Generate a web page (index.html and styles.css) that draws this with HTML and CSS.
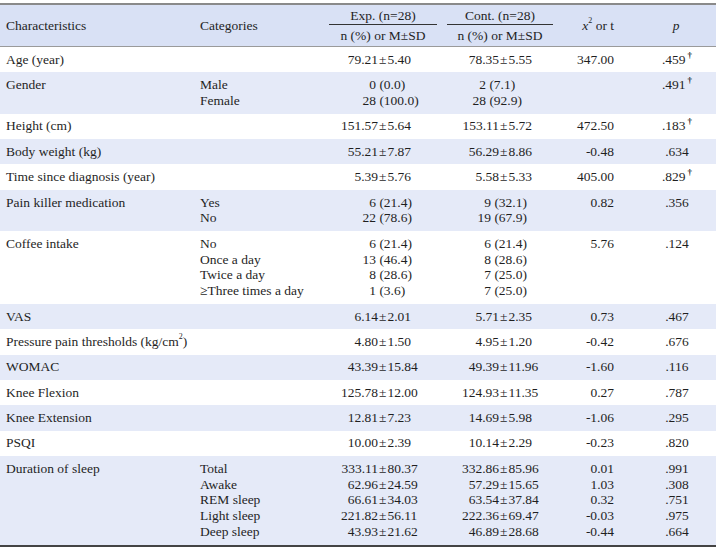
FILE: index.html
```html
<!DOCTYPE html>
<html lang="en">
<head>
<meta charset="utf-8">
<title>Characteristics table</title>
<link rel="stylesheet" href="styles.css">
</head>
<body>
<table class="tbl">
  <colgroup>
    <col class="w1"><col class="w2"><col class="w3"><col class="w4"><col class="w5"><col class="w6">
  </colgroup>
  <thead>
    <tr class="h1">
      <th rowspan="2" class="lft mid">Characteristics</th>
      <th rowspan="2" class="lft mid cat">Categories</th>
      <th class="grp"><div class="ul">Exp. (n=28)</div></th>
      <th class="grp"><div class="ul">Cont. (n=28)</div></th>
      <th rowspan="2" class="mid stat"><i>x</i><sup class="sq">2</sup> or t</th>
      <th rowspan="2" class="mid pv"><i>p</i></th>
    </tr>
    <tr class="h2">
      <th class="sub">n (%) or M±SD</th>
      <th class="sub">n (%) or M±SD</th>
    </tr>
  </thead>
  <tbody>
    <tr>
      <td>Age (year)</td><td class="cat"></td>
      <td class="e"><div><span class="a">79.21</span><span class="pm">±</span>5.40</div></td>
      <td class="c"><div><span class="a">78.35</span><span class="pm">±</span>5.55</div></td>
      <td class="stat">347.00</td><td class="pv">.459<sup class="dg">†</sup></td>
    </tr>
    <tr>
      <td>Gender</td><td class="cat"><div>Male</div><div>Female</div></td>
      <td class="e"><div><span class="a p">0</span>&nbsp;(0.0)</div><div><span class="a p">28</span>&nbsp;(100.0)</div></td>
      <td class="c"><div><span class="a p g">2</span>&nbsp;(7.1)</div><div><span class="a p g">28</span>&nbsp;(92.9)</div></td>
      <td class="stat"></td><td class="pv">.491<sup class="dg">†</sup></td>
    </tr>
    <tr>
      <td>Height (cm)</td><td class="cat"></td>
      <td class="e"><div><span class="a">151.57</span><span class="pm">±</span>5.64</div></td>
      <td class="c"><div><span class="a">153.11</span><span class="pm">±</span>5.72</div></td>
      <td class="stat">472.50</td><td class="pv">.183<sup class="dg">†</sup></td>
    </tr>
    <tr>
      <td>Body weight (kg)</td><td class="cat"></td>
      <td class="e"><div><span class="a">55.21</span><span class="pm">±</span>7.87</div></td>
      <td class="c"><div><span class="a">56.29</span><span class="pm">±</span>8.86</div></td>
      <td class="stat">-0.48</td><td class="pv">.634</td>
    </tr>
    <tr>
      <td>Time since diagnosis (year)</td><td class="cat"></td>
      <td class="e"><div><span class="a">5.39</span><span class="pm">±</span>5.76</div></td>
      <td class="c"><div><span class="a">5.58</span><span class="pm">±</span>5.33</div></td>
      <td class="stat">405.00</td><td class="pv">.829<sup class="dg">†</sup></td>
    </tr>
    <tr>
      <td>Pain killer medication</td><td class="cat"><div>Yes</div><div>No</div></td>
      <td class="e"><div><span class="a p">6</span>&nbsp;(21.4)</div><div><span class="a p">22</span>&nbsp;(78.6)</div></td>
      <td class="c"><div><span class="a p">9</span>&nbsp;(32.1)</div><div><span class="a p">19</span>&nbsp;(67.9)</div></td>
      <td class="stat">0.82</td><td class="pv">.356</td>
    </tr>
    <tr>
      <td>Coffee intake</td>
      <td class="cat"><div>No</div><div>Once a day</div><div>Twice a day</div><div>≥Three times a day</div></td>
      <td class="e"><div><span class="a p">6</span>&nbsp;(21.4)</div><div><span class="a p">13</span>&nbsp;(46.4)</div><div><span class="a p">8</span>&nbsp;(28.6)</div><div><span class="a p">1</span>&nbsp;(3.6)</div></td>
      <td class="c"><div><span class="a p">6</span>&nbsp;(21.4)</div><div><span class="a p">8</span>&nbsp;(28.6)</div><div><span class="a p">7</span>&nbsp;(25.0)</div><div><span class="a p">7</span>&nbsp;(25.0)</div></td>
      <td class="stat">5.76</td><td class="pv">.124</td>
    </tr>
    <tr>
      <td>VAS</td><td class="cat"></td>
      <td class="e"><div><span class="a">6.14</span><span class="pm">±</span>2.01</div></td>
      <td class="c"><div><span class="a">5.71</span><span class="pm">±</span>2.35</div></td>
      <td class="stat">0.73</td><td class="pv">.467</td>
    </tr>
    <tr>
      <td>Pressure pain thresholds (kg/cm<sup class="sq">2</sup>)</td><td class="cat"></td>
      <td class="e"><div><span class="a">4.80</span><span class="pm">±</span>1.50</div></td>
      <td class="c"><div><span class="a">4.95</span><span class="pm">±</span>1.20</div></td>
      <td class="stat">-0.42</td><td class="pv">.676</td>
    </tr>
    <tr>
      <td>WOMAC</td><td class="cat"></td>
      <td class="e"><div><span class="a">43.39</span><span class="pm">±</span>15.84</div></td>
      <td class="c"><div><span class="a">49.39</span><span class="pm">±</span>11.96</div></td>
      <td class="stat">-1.60</td><td class="pv">.116</td>
    </tr>
    <tr>
      <td>Knee Flexion</td><td class="cat"></td>
      <td class="e"><div><span class="a">125.78</span><span class="pm">±</span>12.00</div></td>
      <td class="c"><div><span class="a">124.93</span><span class="pm">±</span>11.35</div></td>
      <td class="stat">0.27</td><td class="pv">.787</td>
    </tr>
    <tr>
      <td>Knee Extension</td><td class="cat"></td>
      <td class="e"><div><span class="a">12.81</span><span class="pm">±</span>7.23</div></td>
      <td class="c"><div><span class="a">14.69</span><span class="pm">±</span>5.98</div></td>
      <td class="stat">-1.06</td><td class="pv">.295</td>
    </tr>
    <tr>
      <td>PSQI</td><td class="cat"></td>
      <td class="e"><div><span class="a">10.00</span><span class="pm">±</span>2.39</div></td>
      <td class="c"><div><span class="a">10.14</span><span class="pm">±</span>2.29</div></td>
      <td class="stat">-0.23</td><td class="pv">.820</td>
    </tr>
    <tr class="last">
      <td>Duration of sleep</td>
      <td class="cat"><div>Total</div><div>Awake</div><div>REM sleep</div><div>Light sleep</div><div>Deep sleep</div></td>
      <td class="e">
        <div><span class="a">333.11</span><span class="pm">±</span>80.37</div>
        <div><span class="a">62.96</span><span class="pm">±</span>24.59</div>
        <div><span class="a">66.61</span><span class="pm">±</span>34.03</div>
        <div><span class="a">221.82</span><span class="pm">±</span>56.11</div>
        <div><span class="a">43.93</span><span class="pm">±</span>21.62</div>
      </td>
      <td class="c">
        <div><span class="a">332.86</span><span class="pm">±</span>85.96</div>
        <div><span class="a">57.29</span><span class="pm">±</span>15.65</div>
        <div><span class="a">63.54</span><span class="pm">±</span>37.84</div>
        <div><span class="a">222.36</span><span class="pm">±</span>69.47</div>
        <div><span class="a">46.89</span><span class="pm">±</span>28.68</div>
      </td>
      <td class="stat"><div>0.01</div><div>1.03</div><div>0.32</div><div>-0.03</div><div>-0.44</div></td>
      <td class="pv"><div>.991</div><div>.308</div><div>.751</div><div>.975</div><div>.664</div></td>
    </tr>
  </tbody>
</table>
</body>
</html>
```

FILE: styles.css
```css
html, body {
  margin: 0;
  padding: 0;
  background: #ffffff;
}
body {
  padding-top: 3px;
  font-family: "Liberation Serif", "Times New Roman", serif;
  font-size: 13.5px;
  color: #1f1f1f;
}
.tbl {
  width: 716px;
  border-collapse: separate;
  border-spacing: 0;
  table-layout: fixed;
}
.w1 { width: 194px; }
.w2 { width: 130px; }
.w3 { width: 118px; }
.w4 { width: 116px; }
.w5 { width: 86px; }
.w6 { width: 72px; }

thead th {
  background: #d9e1f5;
  font-weight: normal;
  line-height: 16px;
  padding: 0;
}
.h1 th {
  border-top: 2px solid #8a8a8a;
}
.h1 th.mid, .h2 th {
  border-bottom: 1px solid #9a9a9a;
}
th.lft {
  text-align: left;
  padding-left: 6px;
}
th.mid {
  vertical-align: middle;
}
th.grp {
  padding: 2px 5px 0 5px;
  text-align: center;
}
.ul {
  line-height: 17px;
  border-bottom: 1px solid #333333;
}
th.sub {
  padding: 3px 0 2px 0;
  text-align: center;
}
th.stat {
  text-align: right;
  padding-right: 30px;
}
th.pv {
  text-align: center;
  padding-right: 8px;
}
.sq {
  font-size: 8px;
  vertical-align: top;
  line-height: 8px;
  position: relative;
  top: -1px;
}

tbody td {
  line-height: 15.8px;
  padding: 4.8px 0 4.8px 6px;
  vertical-align: top;
  white-space: nowrap;
}
tbody tr:nth-child(even) td {
  background: #e5eaf8;
}
tbody tr.last td {
  border-bottom: 2px solid #444444;
}
td.cat {
  padding-left: 6px;
}
td.e, td.c {
  padding-left: 0;
}
.a {
  display: inline-block;
  text-align: right;
}
.e .a { width: 54px; }
.e .a.p { width: 52px; }
.c .a { width: 57px; }
.c .a.p { width: 49px; }
.c .a.p.g { width: 44px; }
.pm {
  margin: 0 1px;
}
td.stat {
  text-align: right;
  padding-right: 30px;
  padding-left: 0;
}
td.pv {
  text-align: center;
  padding-left: 0;
  padding-right: 6px;
}
.dg {
  font-size: 9px;
  font-weight: bold;
  vertical-align: top;
  line-height: 9px;
  margin-left: 2px;
  position: relative;
  top: -1px;
}
```
